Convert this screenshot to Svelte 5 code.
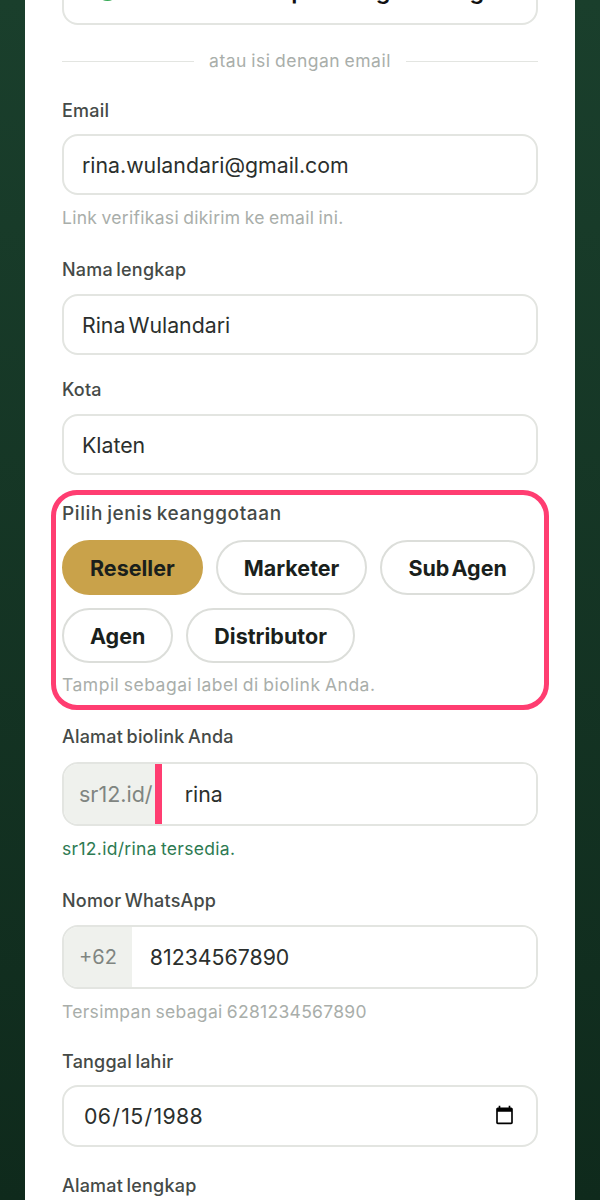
<script>
	let jenis = $state('Reseller');
	const pilihan = ['Reseller', 'Marketer', 'Sub Agen', 'Agen', 'Distributor'];
</script>

<div class="page">
	<main class="card">
		<button class="google">
			<svg width="23" height="23" viewBox="0 0 24 24">
				<path fill="#4285f4" d="M22.5 12.2c0-.8-.1-1.500-.2-2.200H12v4.300h5.900a5 5 0 0 1-2.200 3.300v2.700h3.500c2.100-1.900 3.300-4.700 3.300-8.100z" />
				<path fill="#34a853" d="M12 23c3 0 5.400-1 7.200-2.700l-3.500-2.700c-1 .7-2.200 1.100-3.700 1.100-2.800 0-5.300-1.900-6.100-4.500H2.300v2.800A11 11 0 0 0 12 23z" />
				<path fill="#fbbc05" d="M5.900 14.100a6.600 6.600 0 0 1 0-4.200V7.100H2.300a11 11 0 0 0 0 9.800z" />
				<path fill="#ea4335" d="M12 5.400c1.600 0 3 .5 4.100 1.600l3.100-3.100A11 11 0 0 0 2.300 7.100l3.600 2.800C6.700 7.300 9.200 5.400 12 5.400z" />
			</svg>
			Daftar lebih cepat dengan Google
		</button>

		<div class="divider"><span>atau isi dengan email</span></div>

		<div class="field first">
			<label for="email">Email</label>
			<input id="email" type="text" value="rina.wulandari@gmail.com" />
			<p class="hint">Link verifikasi dikirim ke email ini.</p>
		</div>

		<div class="field">
			<label for="nama">Nama lengkap</label>
			<input id="nama" type="text" value="Rina Wulandari" />
		</div>

		<div class="field">
			<label for="kota">Kota</label>
			<input id="kota" type="text" value="Klaten" />
		</div>

		<div class="field highlight">
			<span class="label">Pilih jenis keanggotaan</span>
			<div class="chips">
				{#each pilihan as item}
					<button class="chip" class:active={jenis === item} onclick={() => (jenis = item)}>{item}</button>
				{/each}
			</div>
			<p class="hint">Tampil sebagai label di biolink Anda.</p>
		</div>

		<div class="field biolink">
			<label for="alamat">Alamat biolink Anda</label>
			<div class="group">
				<span class="prefix marked">sr12.id/</span>
				<input id="alamat" class="after-mark" type="text" value="rina" />
			</div>
			<p class="hint ok">sr12.id/rina tersedia.</p>
		</div>

		<div class="field">
			<label for="wa">Nomor WhatsApp</label>
			<div class="group">
				<span class="prefix code">+62</span>
				<input id="wa" type="text" value="81234567890" />
			</div>
			<p class="hint">Tersimpan sebagai 6281234567890</p>
		</div>

		<div class="field tanggal">
			<label for="lahir">Tanggal lahir</label>
			<input id="lahir" type="date" value="1988-06-15" />
		</div>

		<div class="field alamat">
			<label for="alamat-lengkap">Alamat lengkap</label>
			<textarea id="alamat-lengkap" rows="3"></textarea>
		</div>
	</main>
</div>

<style>
	:global(body) {
		margin: 0;
		background: #0f2a1e;
	}

	.page {
		height: 1200px;
		overflow: hidden;
		padding: 0 25px;
		box-sizing: border-box;
		background: linear-gradient(180deg, #1a3f2c 0%, #0f2a1c 100%);
		font-family: 'Inter', 'Noto Sans', sans-serif;
	}

	.card {
		background: #fff;
		padding: 0 37px;
		margin-top: -45px;
		color: #1a1f1c;
		word-spacing: -1.5px;
	}

	.google {
		width: 100%;
		height: 70px;
		display: flex;
		align-items: center;
		justify-content: center;
		gap: 10px;
		padding: 0;
		background: #fff;
		border: 2px solid #e3e5e1;
		border-radius: 16px;
		font: 600 23.5px 'Inter', sans-serif;
		word-spacing: -1px;
		color: #111;
		white-space: nowrap;
	}

	.divider {
		display: flex;
		align-items: center;
		gap: 15px;
		margin-top: 24px;
		color: #a9aeaa;
		font-size: 17.5px;
		letter-spacing: 0.5px;
		word-spacing: -1px;
		line-height: 24px;
	}

	.divider::before,
	.divider::after {
		content: '';
		flex: 1;
		height: 1px;
		background: #e3e5e1;
	}

	.field {
		display: flow-root;
		margin-top: 23px;
	}

	.field.first {
		margin-top: 26px;
	}

	.field.first label {
		margin-bottom: 11px;
	}

	label,
	.label {
		display: block;
		font-size: 18px;
		font-weight: 540;
		letter-spacing: 0.2px;
		line-height: 24px;
		color: #454a47;
		margin-bottom: 12px;
	}

	input,
	textarea {
		width: 100%;
		box-sizing: border-box;
		height: 61px;
		padding: 0 18px;
		border: 2px solid #e3e5e1;
		border-radius: 16px;
		background: #fff;
		font: 400 21.3px 'Inter', sans-serif;
		word-spacing: -3px;
		color: #2b2f2d;
		outline: none;
		display: block;
	}

	textarea {
		height: 120px;
	}

	input[type='date'] {
		height: 62px;
		padding: 0 19px;
		letter-spacing: 0.3px;
	}

	.hint {
		margin: 11px 0 5px;
		font-size: 17.5px;
		letter-spacing: 0.3px;
		word-spacing: -1px;
		line-height: 24px;
		color: #a9aeaa;
	}

	.hint.ok {
		color: #2d7a52;
	}

	.highlight {
		margin: 15px -11px 0;
		padding: 7px 6px 8px;
		border: 5px solid #ff3d71;
		border-radius: 26px;
	}

	.highlight .label {
		font-size: 19px;
		letter-spacing: 0.6px;
		margin-bottom: 14px;
	}

	.highlight .hint {
		margin: 10px 0 0;
		letter-spacing: 0.5px;
	}

	.chips {
		display: flex;
		flex-wrap: wrap;
		gap: 13px;
	}

	.chip {
		height: 55px;
		padding: 0 26px;
		border: 2.5px solid #dcdeda;
		border-radius: 28px;
		background: #fff;
		font: 700 21.5px 'Inter', sans-serif;
		word-spacing: -3px;
		color: #1a1f1c;
	}

	.chip.active {
		background: #c9a24a;
		border-color: #c9a24a;
	}

	.group {
		display: flex;
		height: 64px;
		border: 2px solid #e3e5e1;
		border-radius: 16px;
		overflow: hidden;
		box-sizing: border-box;
	}

	.group input {
		flex: 1;
		min-width: 0;
		height: auto;
		border: 0;
		border-radius: 0;
	}

	.prefix {
		display: flex;
		align-items: center;
		padding: 0 15px;
		background: #eff1ed;
		color: #7f8581;
		font-size: 21.5px;
	}

	.prefix.code {
		font-size: 20px;
	}

	.prefix.marked {
		padding-right: 2px;
		border-right: 7px solid #ff3d71;
	}

	.group .after-mark {
		padding-left: 23px;
	}

	.biolink {
		margin-top: 15px;
	}

	.biolink label {
		margin-bottom: 13px;
	}

	.tanggal {
		margin-top: 21px;
	}

	.tanggal label {
		margin-bottom: 11px;
	}

	.alamat {
		margin-top: 27px;
	}
</style>
